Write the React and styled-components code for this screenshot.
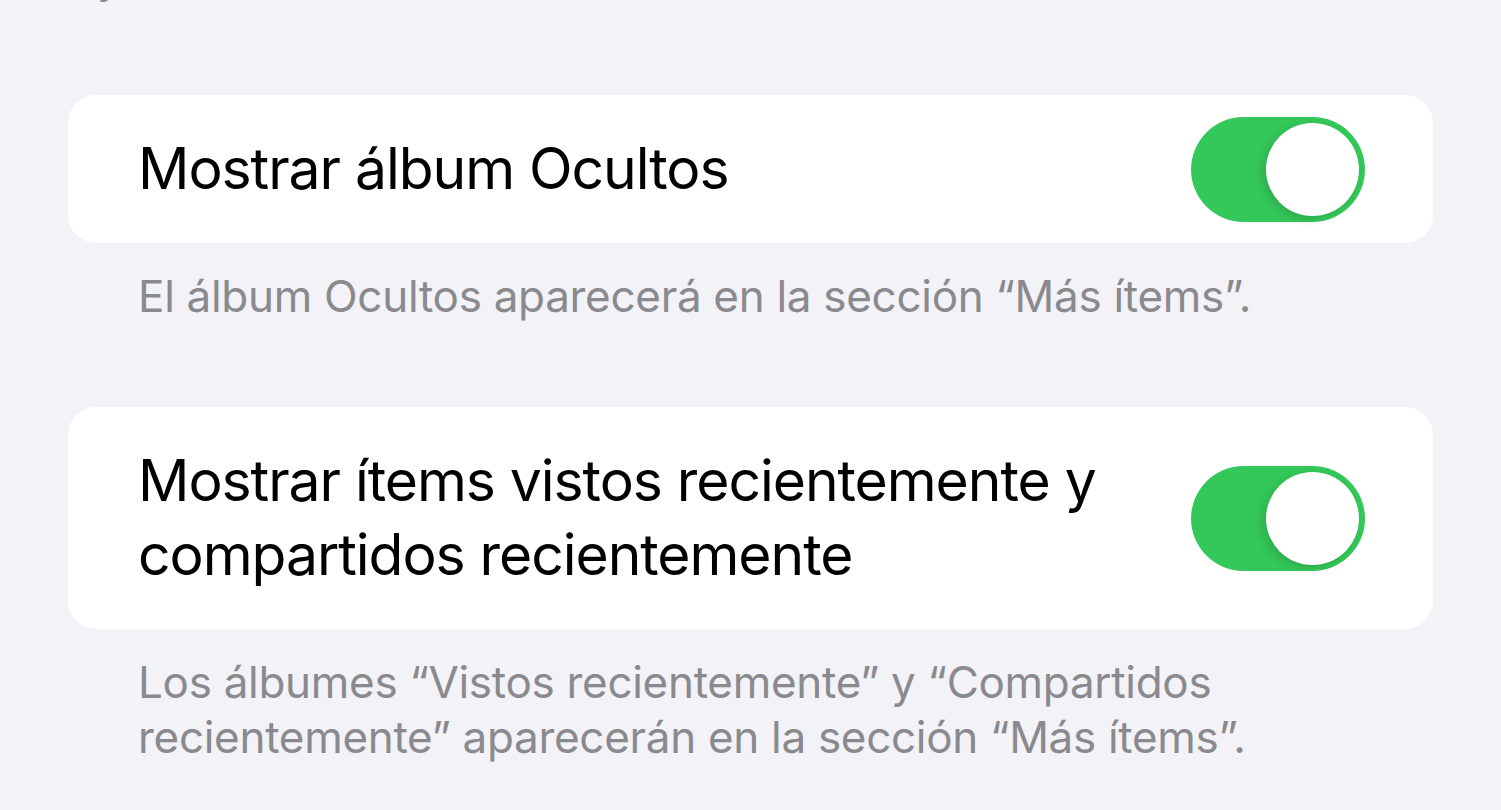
import React, { useState } from "react";
import styled, { createGlobalStyle } from "styled-components";

const GlobalStyle = createGlobalStyle`
  html, body {
    margin: 0;
    padding: 0;
    background: #f2f2f7;
  }
  body {
    font-family: Inter, "Noto Sans", "Liberation Sans", sans-serif;
    -webkit-font-smoothing: antialiased;
  }
`;

const Page = styled.div`
  width: 1501px;
  height: 810px;
  overflow: hidden;
  background: #f2f2f7;
  display: flex;
  flex-direction: column;
`;

const Group = styled.section`
  display: flex;
  flex-direction: column;
  padding: 0 68px;
  margin-bottom: ${({ $gap }) => $gap || 0}px;
`;

const Card = styled.div`
  background: #ffffff;
  border-radius: 28px;
  padding: 0 68px 0 70px;
  display: flex;
  align-items: center;
  justify-content: space-between;
  gap: 40px;
`;

const Label = styled.div`
  padding: 37px 0;
  font-size: 57px;
  line-height: 74px;
  color: #000;
  letter-spacing: -1.05px;
  max-width: 990px;
`;

const Footer = styled.p`
  margin: 0;
  padding: ${({ $top }) => $top ?? 26}px 70px 0 70px;
  font-size: 44px;
  line-height: 55px;
  color: #8a8a8e;
  letter-spacing: -0.3px;
`;

const TopFooter = styled(Footer)`
  margin-top: -50px;
  padding-top: 0;
  margin-bottom: 90px;
`;

const Track = styled.button`
  flex: none;
  width: 174px;
  height: 105px;
  border: none;
  border-radius: 53px;
  padding: 6px;
  background: ${({ $on }) => ($on ? "#34c759" : "#e9e9ea")};
  display: flex;
  justify-content: ${({ $on }) => ($on ? "flex-end" : "flex-start")};
  align-items: center;
  cursor: pointer;
`;

const Knob = styled.span`
  width: 93px;
  height: 93px;
  border-radius: 50%;
  background: #fff;
  box-shadow: -4px 3px 10px rgba(0, 0, 0, 0.12), 0 2px 2px rgba(0, 0, 0, 0.04);
`;

const Switch = ({ on, onToggle }) => (
  <Track $on={on} onClick={onToggle} aria-pressed={on}>
    <Knob />
  </Track>
);

const App = () => {
  const [hidden, setHidden] = useState(true);
  const [recent, setRecent] = useState(true);

  return (
    <Page>
      <GlobalStyle />
      <TopFooter>Ay</TopFooter>
      <Group $gap={83}>
        <Card>
          <Label>Mostrar álbum Ocultos</Label>
          <Switch on={hidden} onToggle={() => setHidden(!hidden)} />
        </Card>
        <Footer>El álbum Ocultos aparecerá en la sección “Más ítems”.</Footer>
      </Group>
      <Group>
        <Card>
          <Label>Mostrar ítems vistos recientemente y compartidos recientemente</Label>
          <Switch on={recent} onToggle={() => setRecent(!recent)} />
        </Card>
        <Footer>
          Los álbumes “Vistos recientemente” y “Compartidos recientemente” aparecerán en la sección “Más ítems”.
        </Footer>
      </Group>
    </Page>
  );
};

export default App;
